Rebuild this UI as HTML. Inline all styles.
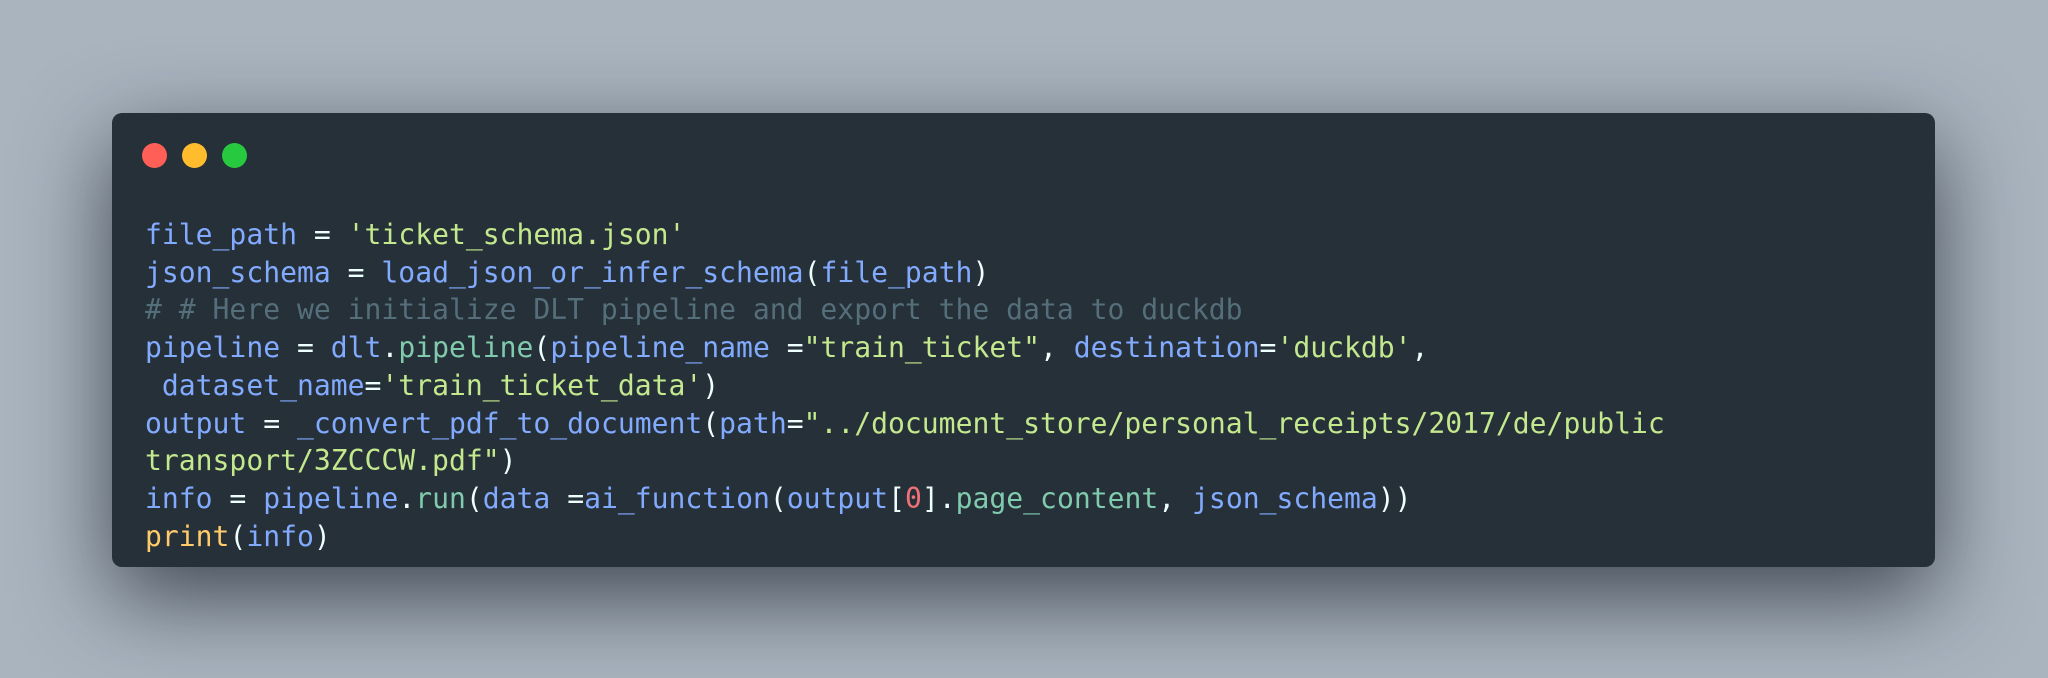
<!DOCTYPE html>
<html><head><meta charset="utf-8"><style>
html,body{margin:0;padding:0}
body{width:2048px;height:678px;background:#a9b4bf;position:relative;overflow:hidden}
.win{position:absolute;left:112px;top:113px;width:1823px;height:454px;background:#263038;border-radius:10px;box-shadow:0 30px 90px rgba(20,25,35,.7)}
.dot{position:absolute;top:143px;width:25px;height:25px;border-radius:50%}
pre{position:absolute;left:145px;top:216px;margin:0;font-family:"DejaVu Sans Mono","Liberation Mono",monospace;font-size:28.05px;line-height:37.7px;color:#eeffff;letter-spacing:0}
.b{color:#82aaff}.s{color:#c3e88d}.c{color:#546e7a}.f{color:#80cbae}.n{color:#f07178}.y{color:#ffcb6b}
</style></head><body>
<div class="win"></div>
<div class="dot" style="left:142px;background:#ff5f56"></div>
<div class="dot" style="left:182px;background:#ffbd2e"></div>
<div class="dot" style="left:222px;background:#27c93f"></div>
<pre><span class="b">file_path</span> = <span class="s">'ticket_schema.json'</span>
<span class="b">json_schema</span> = <span class="b">load_json_or_infer_schema</span>(<span class="b">file_path</span>)
<span class="c"># # Here we initialize DLT pipeline and export the data to duckdb</span>
<span class="b">pipeline</span> = <span class="b">dlt</span>.<span class="f">pipeline</span>(<span class="b">pipeline_name</span> =<span class="s">"train_ticket"</span>, <span class="b">destination</span>=<span class="s">'duckdb'</span>,
 <span class="b">dataset_name</span>=<span class="s">'train_ticket_data'</span>)
<span class="b">output</span> = <span class="b">_convert_pdf_to_document</span>(<span class="b">path</span>=<span class="s">"../document_store/personal_receipts/2017/de/public</span>
<span class="s">transport/3ZCCCW.pdf"</span>)
<span class="b">info</span> = <span class="b">pipeline</span>.<span class="f">run</span>(<span class="b">data</span> =<span class="b">ai_function</span>(<span class="b">output</span>[<span class="n">0</span>].<span class="f">page_content</span>, <span class="b">json_schema</span>))
<span class="y">print</span>(<span class="b">info</span>)</pre>
</body></html>
